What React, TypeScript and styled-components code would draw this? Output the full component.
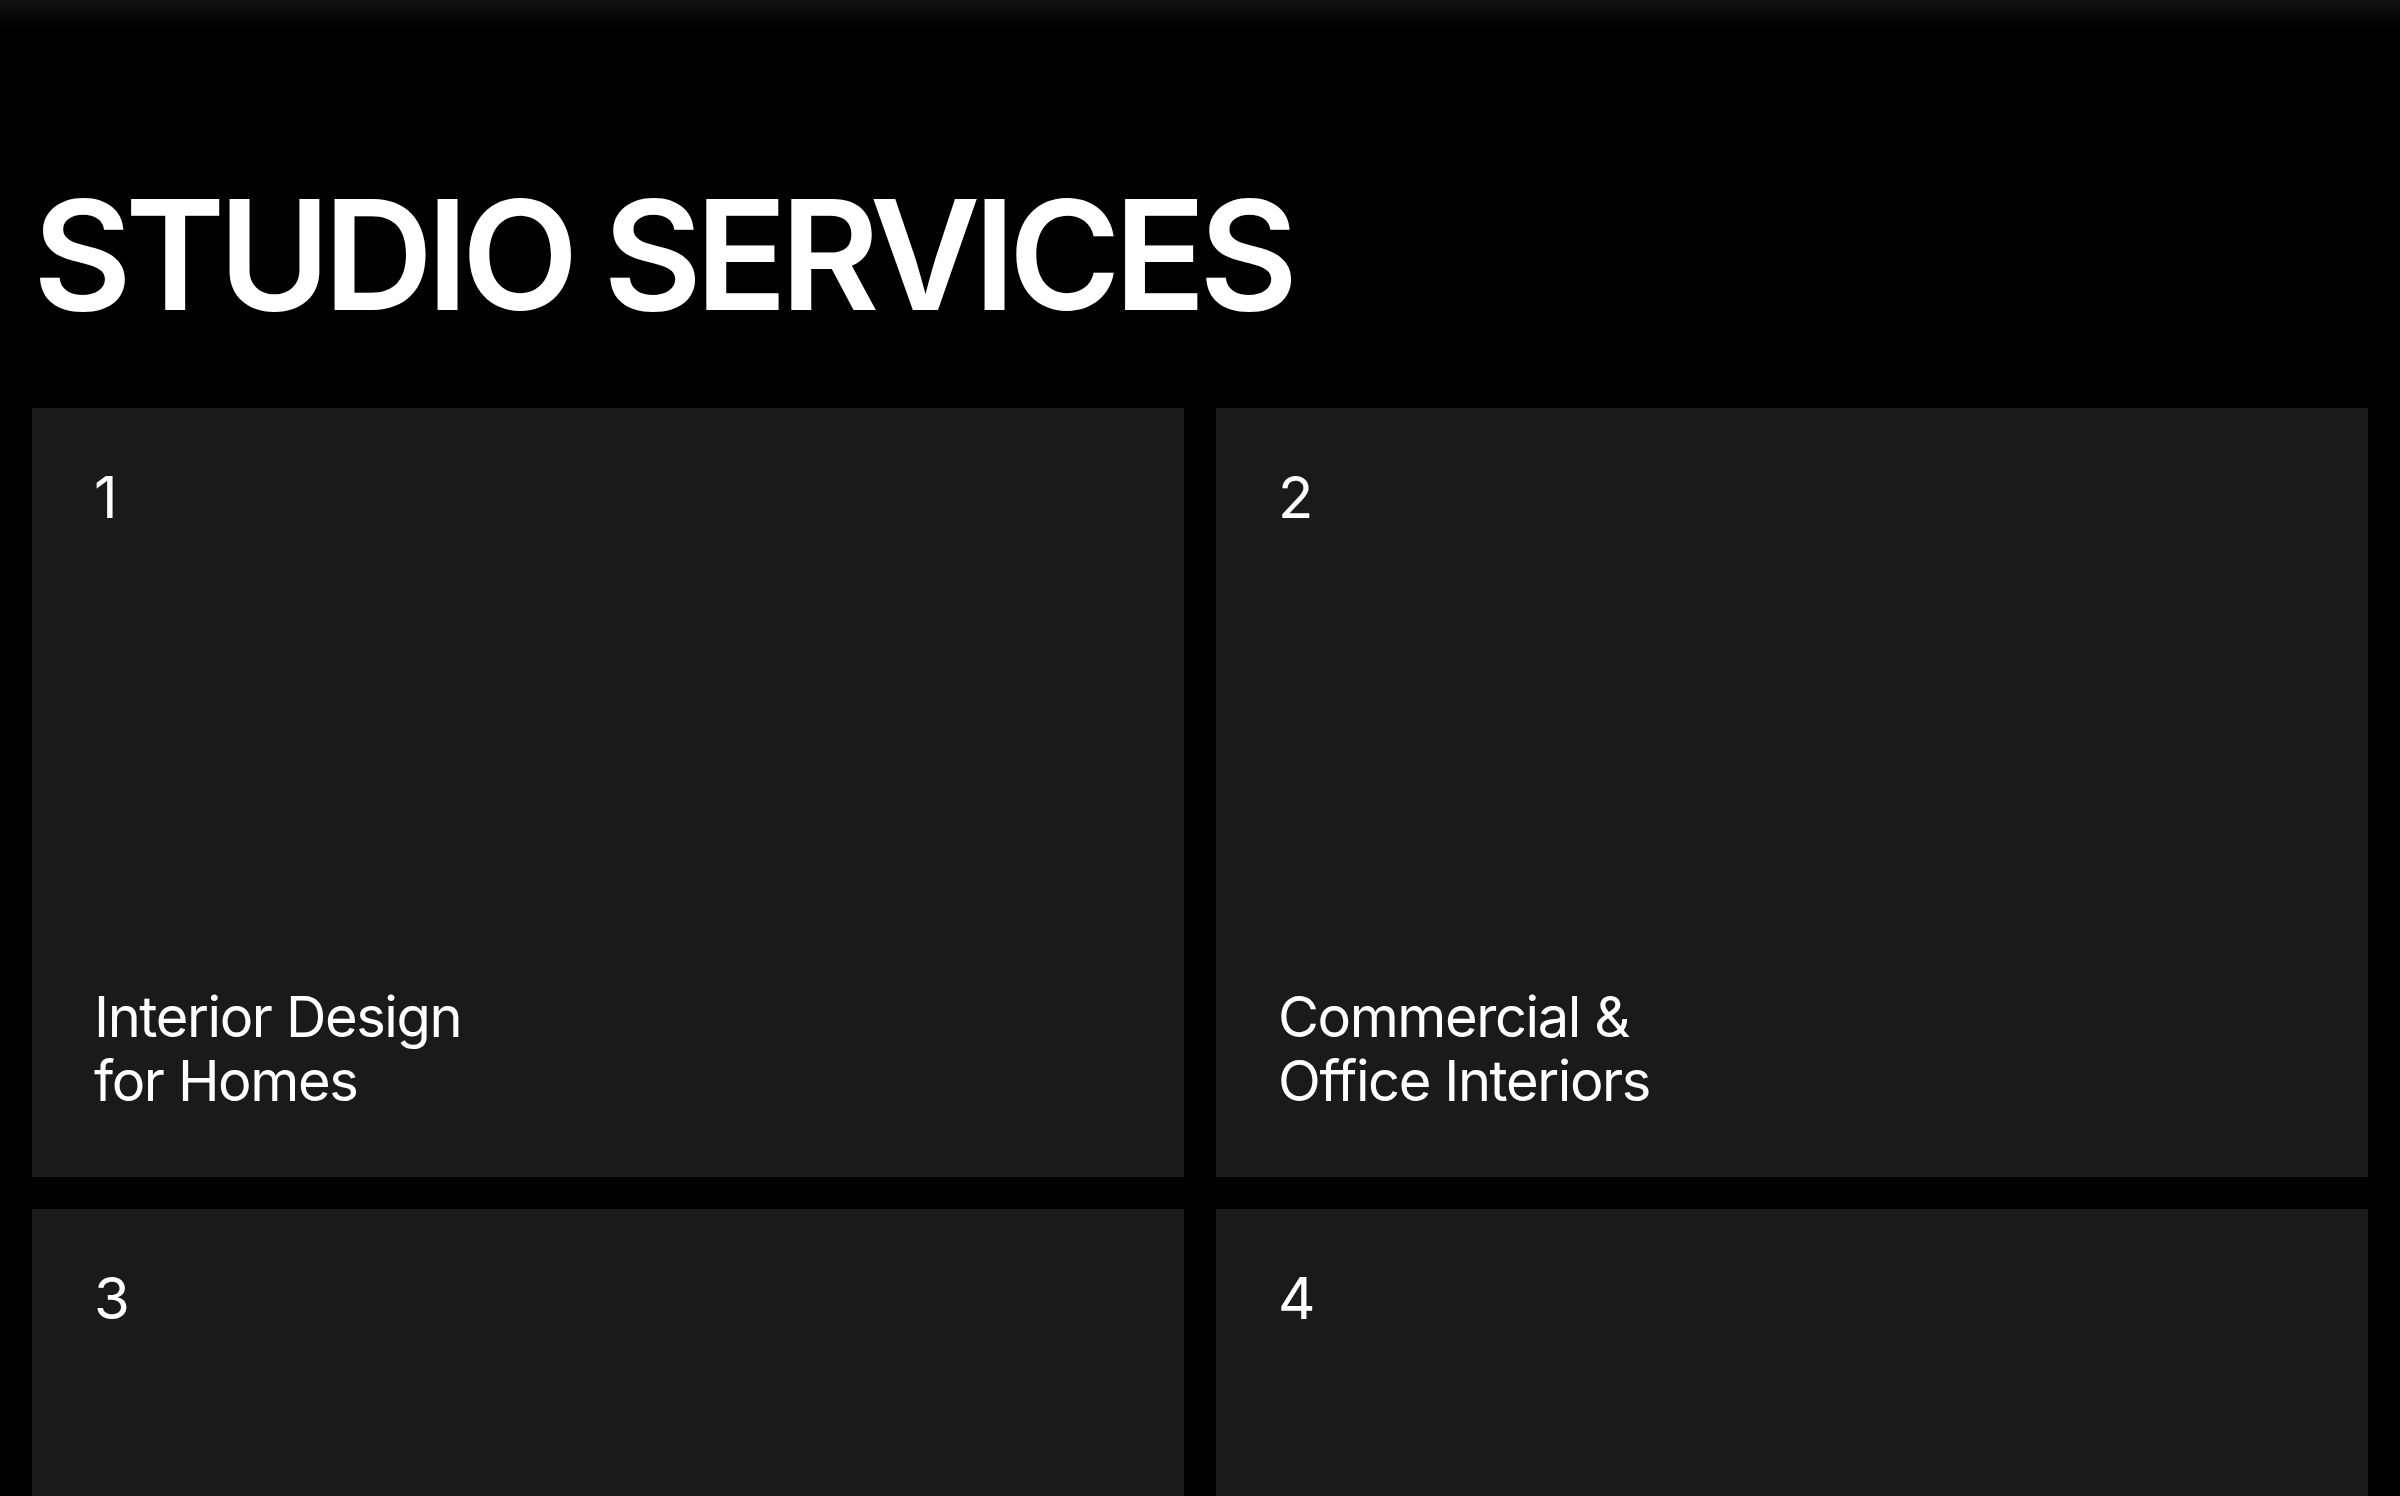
import React from 'react';
import styled, { createGlobalStyle } from 'styled-components';

const GlobalStyle = createGlobalStyle`
    html, body {
        margin: 0;
        padding: 0;
        background: #000;
    }
    body {
        font-family: Inter, 'Noto Sans', 'Liberation Sans', sans-serif;
        color: #fff;
        -webkit-font-smoothing: antialiased;
    }
`;

const Page = styled.main`
    min-height: 100vh;
    background: #000;
    position: relative;
    padding: 0 32px 32px;
`;

// faint shade along the top edge of the viewport
const TopShade = styled.div`
    position: absolute;
    top: 0;
    left: 0;
    right: 0;
    height: 28px;
    background: linear-gradient(to bottom, #111 0%, rgba(0, 0, 0, 0) 100%);
    pointer-events: none;
`;

const Header = styled.header`
    padding-top: 179px;
    padding-bottom: 77px;
`;

const Title = styled.h1`
    margin: 0;
    font-size: 152px;
    line-height: 1;
    font-weight: 600;
    letter-spacing: -0.045em;
    padding-left: 1px;
`;

const Grid = styled.section`
    display: grid;
    grid-template-columns: repeat(2, 1fr);
    gap: 32px;
`;

const Card = styled.article`
    height: 769px;
    background: #1a1a1a;
    padding: 60px 62px 64px;
    box-sizing: border-box;
    display: flex;
    flex-direction: column;
    justify-content: space-between;
`;

const Index = styled.span`
    font-size: 58px;
    line-height: 1;
    font-weight: 400;
`;

const Name = styled.h2`
    margin: 0;
    font-size: 56px;
    line-height: 64px;
    font-weight: 400;
    letter-spacing: -0.025em;
`;

const services = [
    { id: 1, lines: ['Interior Design', 'for Homes'] },
    { id: 2, lines: ['Commercial &', 'Office Interiors'] },
    { id: 3, lines: ['Space Planning', '& Layout'] },
    { id: 4, lines: ['Furniture &', 'Decor Styling'] },
];

const App: React.FC = () => {
    return (
        <>
            <GlobalStyle />
            <Page>
                <TopShade />
                <Header>
                    <Title>STUDIO SERVICES</Title>
                </Header>
                <Grid>
                    {services.map((s) => (
                        <Card key={s.id}>
                            <Index>{s.id}</Index>
                            <Name>
                                {s.lines[0]}
                                <br />
                                {s.lines[1]}
                            </Name>
                        </Card>
                    ))}
                </Grid>
            </Page>
        </>
    );
};

export default App;
